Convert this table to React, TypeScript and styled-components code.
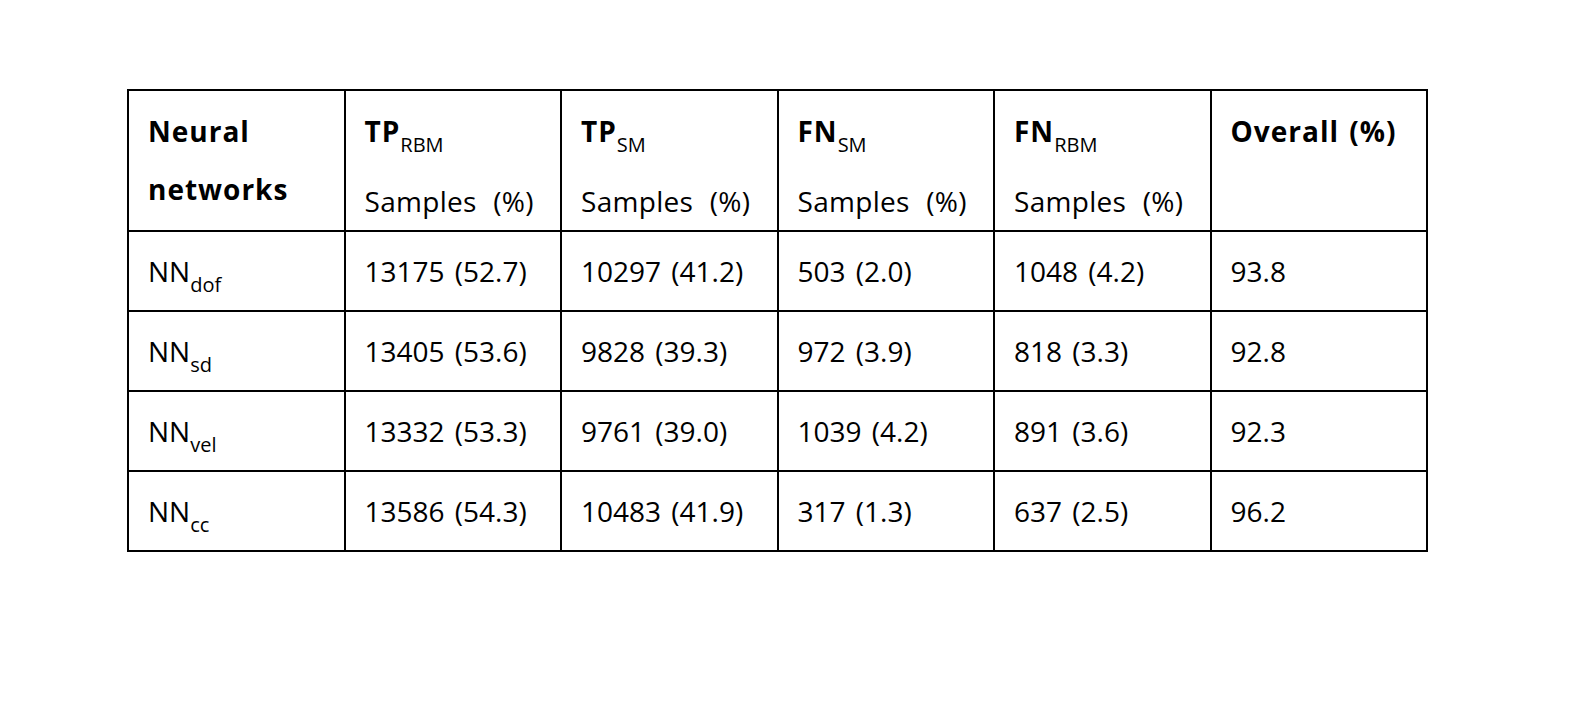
import React from "react";
import styled, { createGlobalStyle } from "styled-components";

const GlobalStyle = createGlobalStyle`
  html, body {
    margin: 0;
    padding: 0;
    background: #ffffff;
  }
  body {
    font-family: "Open Sans", "Liberation Sans", sans-serif;
    color: #000000;
  }
`;

const Page = styled.main`
  padding: 89px 0 0 127px;
  width: 1594px;
  height: 706px;
  box-sizing: border-box;
`;

const Table = styled.table`
  border-collapse: collapse;
  table-layout: fixed;
  width: 1301px;
  font-size: 28px;
`;

const HeadCell = styled.th`
  border: 2px solid #000;
  height: 137px;
  padding: 11px 8px 0 19px;
  vertical-align: top;
  text-align: left;
  font-weight: 400;
  box-sizing: border-box;
`;

const Cell = styled.td`
  border: 2px solid #000;
  height: 78px;
  padding: 0 8px 0 19px;
  vertical-align: middle;
  text-align: left;
  line-height: 38px;
  white-space: nowrap;
`;

const Line = styled.div<{ $bold?: boolean; $gap?: number }>`
  display: block;
  line-height: 58px;
  font-weight: ${(p) => (p.$bold ? 700 : 400)};
  letter-spacing: ${(p) => (p.$bold ? "1px" : "0.3px")};
  word-spacing: ${(p) => (p.$bold ? "2px" : "9px")};
  margin-top: ${(p) => p.$gap ?? 0}px;
  white-space: nowrap;
`;

const Sub = styled.span`
  font-size: 20px;
  font-weight: 400;
  letter-spacing: 0;
  line-height: 0;
  vertical-align: -10px;
`;

const Value = styled.span`
  word-spacing: 3px;
`;

type Row = {
  sub: string;
  values: [string, string, string, string, string];
};

const rows: Row[] = [
  { sub: "dof", values: ["13175 (52.7)", "10297 (41.2)", "503 (2.0)", "1048 (4.2)", "93.8"] },
  { sub: "sd", values: ["13405 (53.6)", "9828 (39.3)", "972 (3.9)", "818 (3.3)", "92.8"] },
  { sub: "vel", values: ["13332 (53.3)", "9761 (39.0)", "1039 (4.2)", "891 (3.6)", "92.3"] },
  { sub: "cc", values: ["13586 (54.3)", "10483 (41.9)", "317 (1.3)", "637 (2.5)", "96.2"] },
];

const groups: { main: string; sub: string }[] = [
  { main: "TP", sub: "RBM" },
  { main: "TP", sub: "SM" },
  { main: "FN", sub: "SM" },
  { main: "FN", sub: "RBM" },
];

export default function App() {
  return (
    <>
      <GlobalStyle />
      <Page>
        <Table>
          <thead>
            <tr>
              <HeadCell>
                <Line $bold>Neural</Line>
                <Line $bold>networks</Line>
              </HeadCell>
              {groups.map((g, i) => (
                <HeadCell key={i}>
                  <Line $bold>
                    {g.main}
                    <Sub>{g.sub}</Sub>
                  </Line>
                  <Line $gap={12}>Samples (%)</Line>
                </HeadCell>
              ))}
              <HeadCell>
                <Line $bold>Overall (%)</Line>
              </HeadCell>
            </tr>
          </thead>
          <tbody>
            {rows.map((r) => (
              <tr key={r.sub}>
                <Cell>
                  NN<Sub>{r.sub}</Sub>
                </Cell>
                {r.values.map((v, j) => (
                  <Cell key={j}>
                    <Value>{v}</Value>
                  </Cell>
                ))}
              </tr>
            ))}
          </tbody>
        </Table>
      </Page>
    </>
  );
}
